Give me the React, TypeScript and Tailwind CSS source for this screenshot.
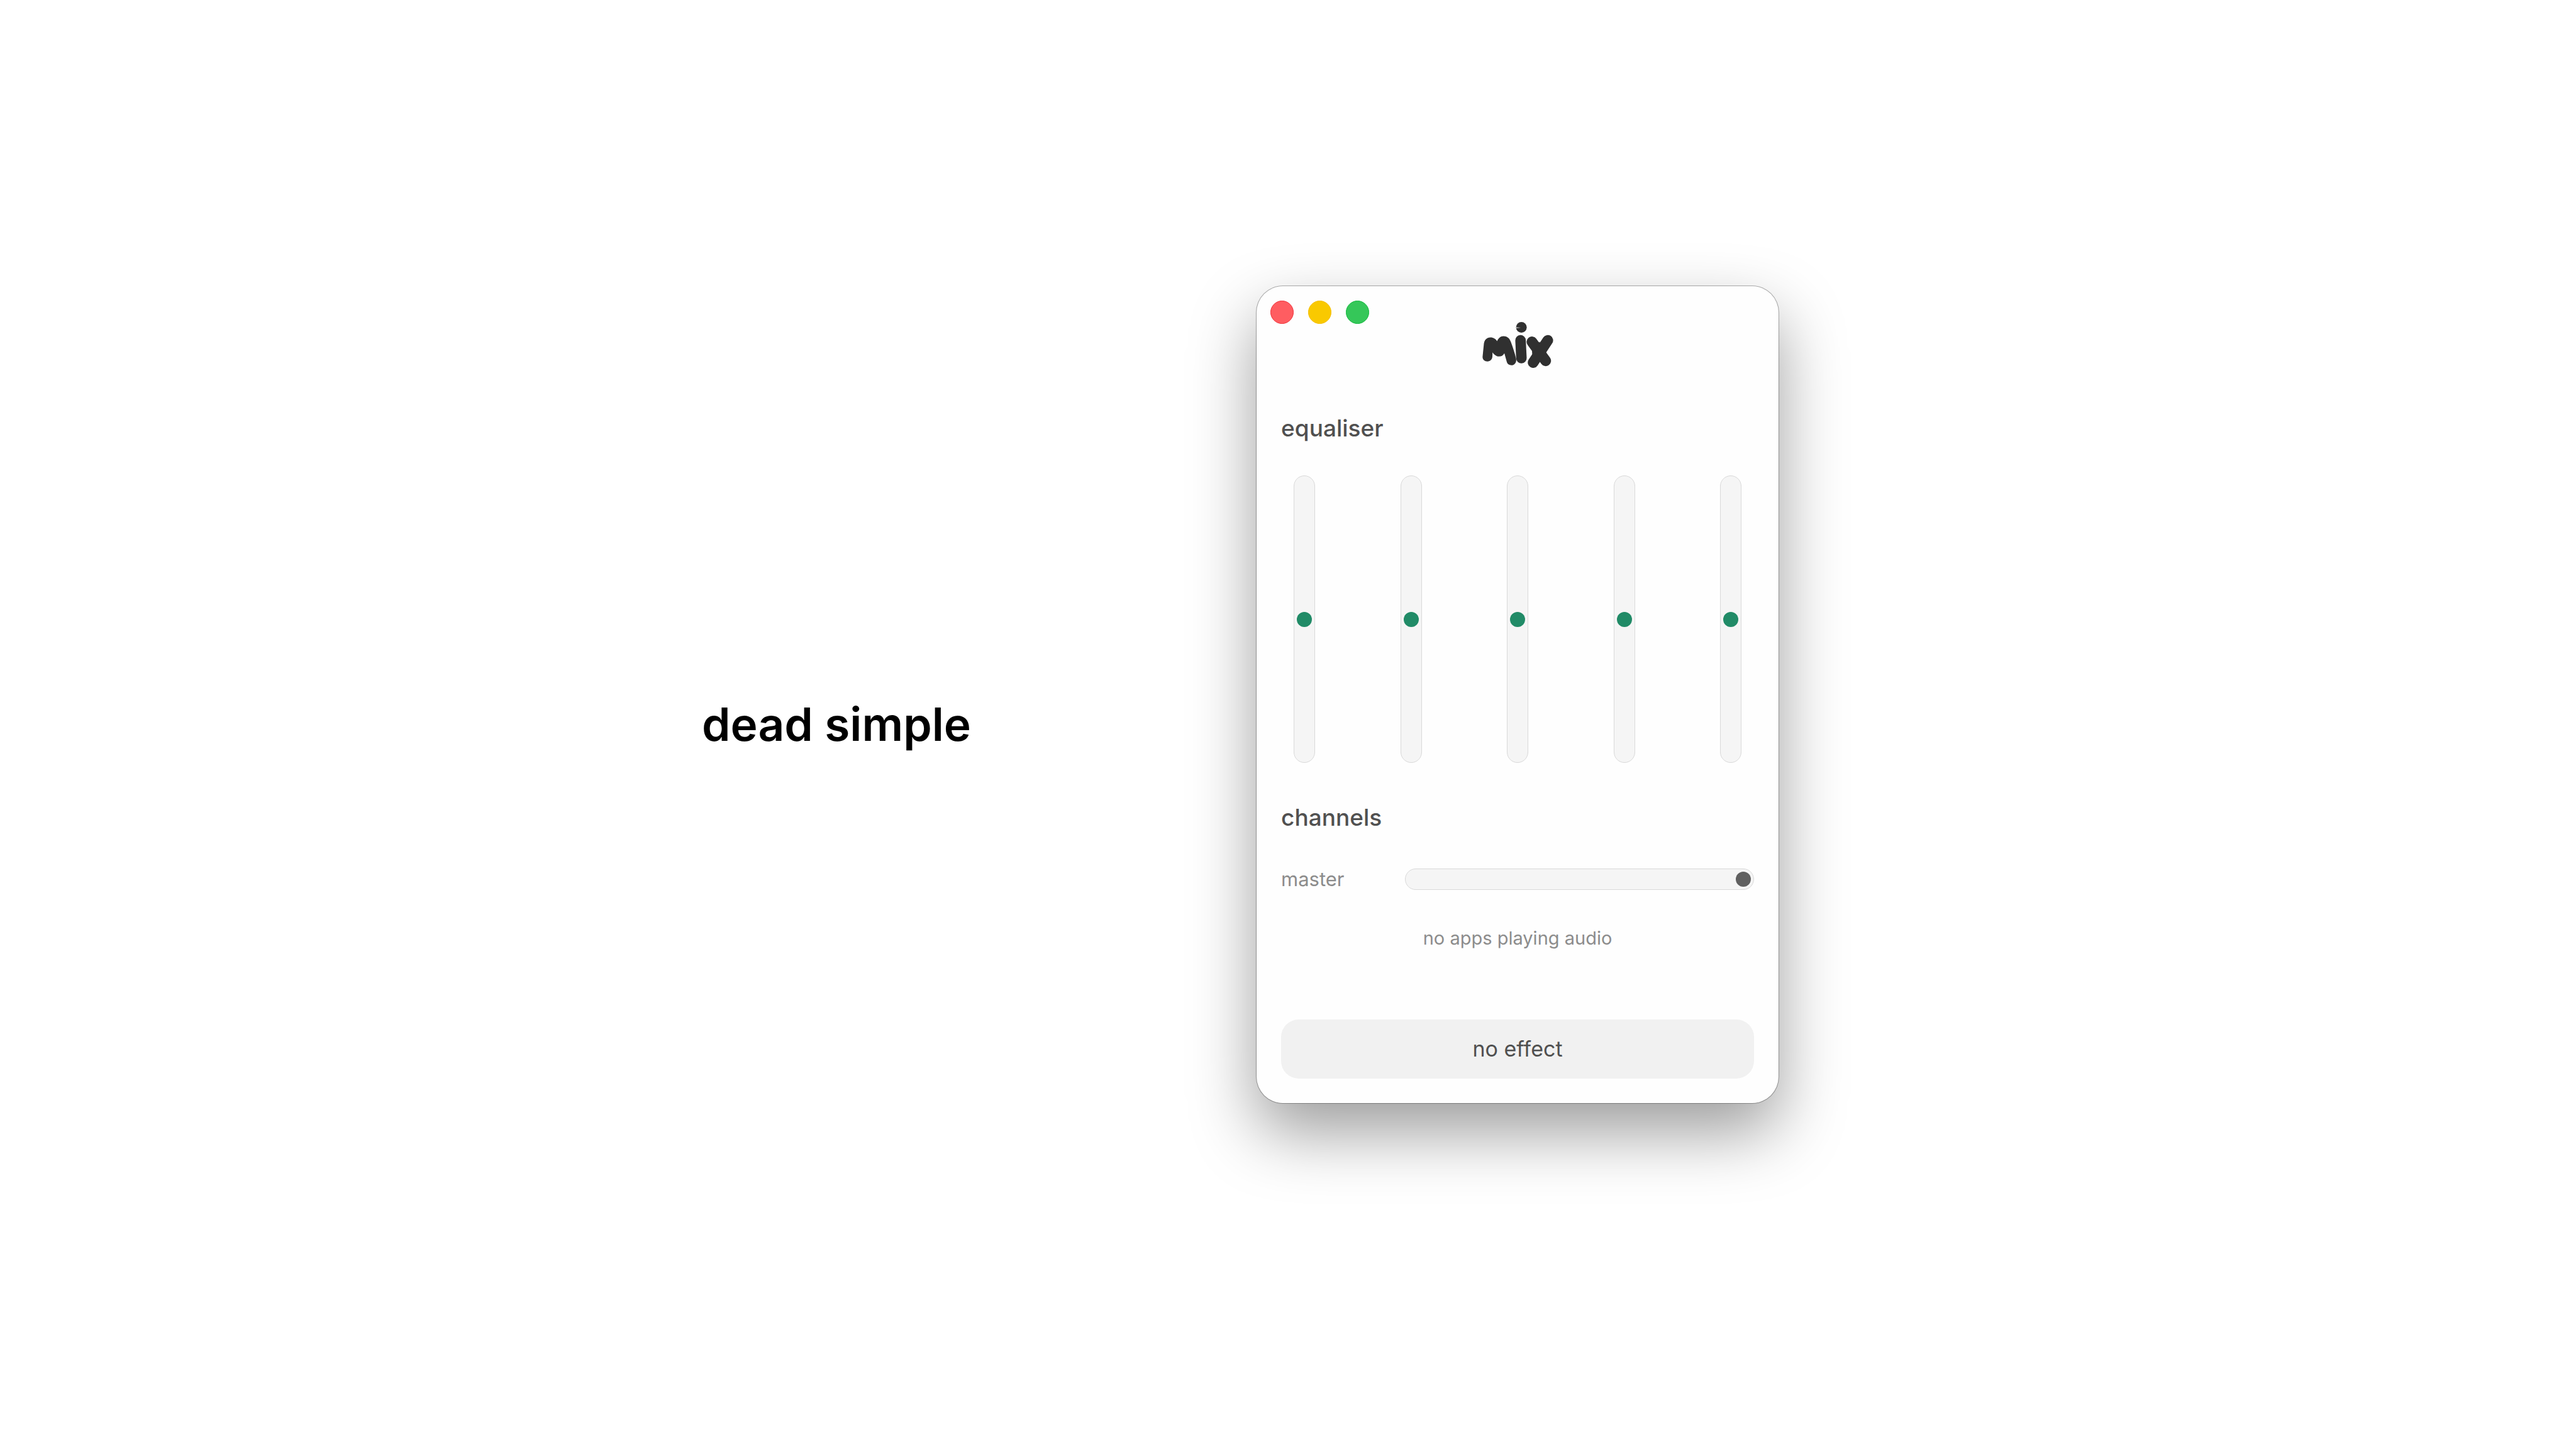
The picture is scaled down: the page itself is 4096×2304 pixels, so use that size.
import React, { useState } from "react";

const BANDS = ["60 Hz", "230 Hz", "910 Hz", "4 kHz", "14 kHz"];

const LIGHTS = [
  { label: "Close", style: "bg-[#ff5d61] border-[#f0333a]" },
  { label: "Minimise", style: "bg-[#f9c900] border-[#f5be00]" },
  { label: "Zoom", style: "bg-[#35c759] border-[#12b83c]" },
];

function Logo() {
  return (
    <svg viewBox="68 59 478 310" className="h-[73px] w-[113px]" role="img" aria-label="mix">
      <g fill="#303030" stroke="none">
        <path d="M69 292 L77 212 C79 180 97 163 122 163 C142 163 157 173 167 189 C175 169 190 155 210 155 C233 155 249 167 259 192 C274 232 287 272 295 306 C300 333 284 351 264 351 C247 351 236 342 232 328 L216 270 C207 285 196 292 180 292 C163 292 147 281 136 264 L135 293 C133 313 120 325 102 325 C81 325 67 310 69 292 Z" />
        <circle cx="331" cy="95" r="36" />
        <ellipse cx="447" cy="260" rx="44" ry="65" />
      </g>
      <path d="M295 93 L327 97 L295 102 Z" fill="#a8a8a8" />
      <g fill="none" stroke="#303030" strokeLinecap="round">
        <path d="M325 183 L331 303" strokeWidth="71" />
        <path d="M402 193 L495 321" strokeWidth="72" />
        <path d="M509 183 L410 333" strokeWidth="72" />
      </g>
    </svg>
  );
}

function BandSlider({ label }: { label: string }) {
  const [value, setValue] = useState(50);
  return (
    <input
      type="range"
      aria-label={label}
      min={0}
      max={100}
      value={value}
      onChange={(e) => setValue(Number(e.target.value))}
      className="m-0 h-[457px] w-[34px] appearance-none rounded-full border border-[#d9d9d9] bg-[#f5f5f5] p-1 [direction:rtl] [writing-mode:vertical-lr] [&::-webkit-slider-thumb]:size-6 [&::-webkit-slider-thumb]:appearance-none [&::-webkit-slider-thumb]:rounded-full [&::-webkit-slider-thumb]:bg-[#218b67]"
    />
  );
}

function MixWindow() {
  const [master, setMaster] = useState(100);
  return (
    <section className="mb-[95px] w-[830px] shrink-0 rounded-[42px] bg-[#fefefe] px-[39px] pt-[23px] pb-[39px] shadow-[0_0_0_1px_rgba(0,0,0,0.3),0_46px_104px_rgba(0,0,0,0.39)]">
      <div className="-ml-[17px] flex gap-[23px]">
        {LIGHTS.map((l) => (
          <button key={l.label} aria-label={l.label} className={`size-[37px] rounded-full border ${l.style}`} />
        ))}
      </div>
      <div className="-mt-[3px] flex justify-center">
        <Logo />
      </div>

      <h2 className="mt-[72px] text-[37px] leading-[48px] font-medium text-[#505050]">equaliser</h2>
      <div className="mt-[51px] flex justify-between px-5">
        {BANDS.map((b) => (
          <BandSlider key={b} label={b} />
        ))}
      </div>

      <h2 className="mt-[63px] text-[37px] leading-[48px] font-medium text-[#505050]">channels</h2>
      <div className="mt-[50px] flex items-center">
        <label htmlFor="master" className="w-[197px] text-[31px] leading-[48px] text-[#8c8c8c]">
          master
        </label>
        <input
          id="master"
          type="range"
          min={0}
          max={100}
          value={master}
          onChange={(e) => setMaster(Number(e.target.value))}
          className="m-0 h-[34px] min-w-0 flex-1 appearance-none rounded-full border border-[#d9d9d9] bg-[#f5f5f5] p-1 [&::-webkit-slider-thumb]:size-6 [&::-webkit-slider-thumb]:appearance-none [&::-webkit-slider-thumb]:rounded-full [&::-webkit-slider-thumb]:bg-[#606060]"
        />
      </div>
      <p className="mt-[46px] text-center text-[29px] leading-[48px] text-[#8c8c8c]">no apps playing audio</p>

      <button className="mt-[105px] h-[94px] w-full rounded-[28px] bg-[#f1f1f1] text-[34px] leading-[48px] text-[#505050]">
        no effect
      </button>
    </section>
  );
}

export default function App() {
  return (
    <main className="flex min-h-screen items-center justify-center gap-[454px] bg-white pr-[152px] font-['Inter',sans-serif]">
      <h1 className="text-[73px] leading-[96px] font-semibold whitespace-nowrap text-black">dead simple</h1>
      <MixWindow />
    </main>
  );
}
